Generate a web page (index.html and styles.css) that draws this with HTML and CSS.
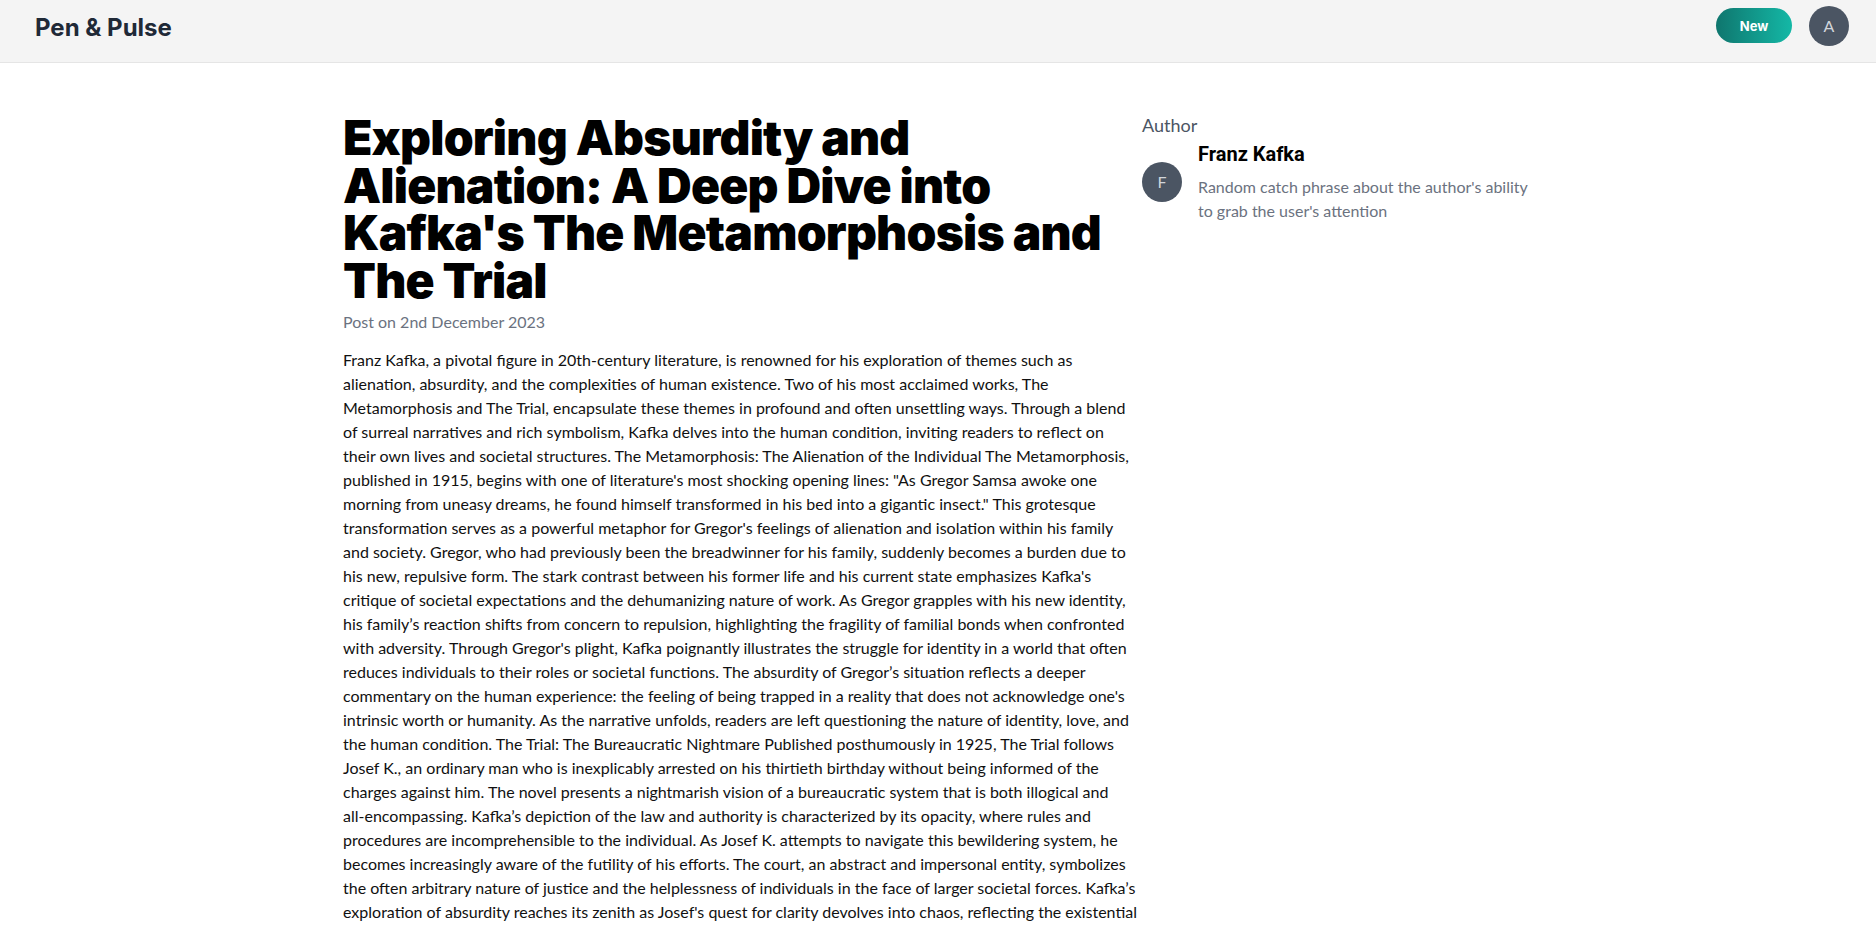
FILE: index.html
```html
<!DOCTYPE html>
<html lang="en">
<head>
<meta charset="utf-8">
<title>Pen &amp; Pulse</title>
<link rel="stylesheet" href="styles.css">
</head>
<body>
<header class="topbar">
  <div class="logo">Pen &amp; Pulse</div>
  <div class="top-actions">
    <button class="btn-new">New</button>
    <div class="avatar">A</div>
  </div>
</header>
<main class="layout">
  <article class="post">
    <h1 class="post-title">Exploring Absurdity and Alienation: A Deep Dive into Kafka's The Metamorphosis and The Trial</h1>
    <p class="post-date">Post on 2nd December 2023</p>
    <p class="post-body">Franz Kafka, a pivotal figure in 20th-century literature, is renowned for his exploration of themes such as alienation, absurdity, and the complexities of human existence. Two of his most acclaimed works, The Metamorphosis and The Trial, encapsulate these themes in profound and often unsettling ways. Through a blend of surreal narratives and rich symbolism, Kafka delves into the human condition, inviting readers to reflect on their own lives and societal structures. The Metamorphosis: The Alienation of the Individual The Metamorphosis, published in 1915, begins with one of literature's most shocking opening lines: "As Gregor Samsa awoke one morning from uneasy dreams, he found himself transformed in his bed into a gigantic insect." This grotesque transformation serves as a powerful metaphor for Gregor's feelings of alienation and isolation within his family and society. Gregor, who had previously been the breadwinner for his family, suddenly becomes a burden due to his new, repulsive form. The stark contrast between his former life and his current state emphasizes Kafka's critique of societal expectations and the dehumanizing nature of work. As Gregor grapples with his new identity, his family’s reaction shifts from concern to repulsion, highlighting the fragility of familial bonds when confronted with adversity. Through Gregor's plight, Kafka poignantly illustrates the struggle for identity in a world that often reduces individuals to their roles or societal functions. The absurdity of Gregor’s situation reflects a deeper commentary on the human experience: the feeling of being trapped in a reality that does not acknowledge one's intrinsic worth or humanity. As the narrative unfolds, readers are left questioning the nature of identity, love, and the human condition. The Trial: The Bureaucratic Nightmare Published posthumously in 1925, The Trial follows Josef K., an ordinary man who is inexplicably arrested on his thirtieth birthday without being informed of the charges against him. The novel presents a nightmarish vision of a bureaucratic system that is both illogical and <span class="nowrap">all-encompassing.</span> Kafka’s depiction of the law and authority is characterized by its opacity, where rules and procedures are incomprehensible to the individual. As Josef K. attempts to navigate this bewildering system, he becomes increasingly aware of the futility of his efforts. The court, an abstract and impersonal entity, symbolizes the often arbitrary nature of justice and the helplessness of individuals in the face of larger societal forces. Kafka’s exploration of absurdity reaches its zenith as Josef's quest for clarity devolves into chaos, reflecting the existential anxiety of modern life. Both works remain strikingly relevant, reminding readers of the enduring struggle to find meaning in a world that so often resists it.</p>
  </article>
  <aside class="sidebar">
    <h2 class="side-label">Author</h2>
    <div class="author">
      <div class="author-avatar">F</div>
      <div class="author-info">
        <h3 class="author-name">Franz Kafka</h3>
        <p class="author-bio">Random catch phrase about the author's ability to grab the user's attention</p>
      </div>
    </div>
  </aside>
</main>
</body>
</html>
```
FILE: styles.css
```css
* { box-sizing: border-box; }

body {
  margin: 0;
  background: #ffffff;
  font-family: "Lato", "Liberation Sans", sans-serif;
  color: #111111;
}

.topbar {
  height: 63px;
  display: flex;
  align-items: center;
  justify-content: space-between;
  padding: 0 27px 11px 35px;
  background: #f4f4f4;
  border-bottom: 1px solid #e5e5e5;
}

.logo {
  font-family: "Inter", "Liberation Sans", sans-serif;
  font-weight: 700;
  font-size: 24px;
  line-height: 32px;
  padding-top: 4px;
  color: #1f2937;
}

.top-actions {
  display: flex;
  align-items: center;
  gap: 17px;
}

.btn-new {
  width: 76px;
  height: 35px;
  border: none;
  border-radius: 18px;
  background: linear-gradient(to right, #0f766e, #14b8a6);
  color: #ffffff;
  font-family: "Inter", "Liberation Sans", sans-serif;
  font-weight: 700;
  font-size: 13px;
  padding: 0;
  cursor: pointer;
}

.avatar {
  width: 40px;
  height: 40px;
  border-radius: 50%;
  background: #4b5563;
  color: #d1d5db;
  display: flex;
  align-items: center;
  justify-content: center;
  font-size: 16px;
}

.layout {
  max-width: 1190px;
  margin: 0 auto;
  padding-top: 48px;
  display: flex;
  align-items: flex-start;
}

.post {
  width: 799px;
  flex: none;
  padding-right: 3px;
}

.post-title {
  margin: 3px 0 0;
  font-family: "Inter", "Liberation Sans", sans-serif;
  font-weight: 900;
  font-size: 48px;
  line-height: 47.5px;
  letter-spacing: -0.8px;
  color: #000000;
}

.post-date {
  margin: 6px 0 0;
  font-size: 16px;
  line-height: 24px;
  color: #6b7280;
}

.post-body {
  margin: 14px 0 0;
  font-size: 16px;
  line-height: 24px;
  color: #111111;
}

.nowrap {
  white-space: nowrap;
}

.sidebar {
  flex: 1;
  min-width: 0;
}

.side-label {
  margin: 0;
  font-weight: 400;
  font-size: 18px;
  line-height: 28px;
  color: #4b5563;
}

.author {
  display: flex;
  align-items: center;
  gap: 16px;
  margin-top: 1px;
}

.author-avatar {
  width: 40px;
  height: 40px;
  flex: none;
  border-radius: 50%;
  background: #4b5563;
  color: #d1d5db;
  display: flex;
  align-items: center;
  justify-content: center;
  font-size: 16px;
}

.author-info {
  flex: 1;
  min-width: 0;
}

.author-name {
  margin: 0;
  font-family: "Roboto", "Liberation Sans", sans-serif;
  font-weight: 700;
  font-size: 20px;
  line-height: 28px;
  color: #000000;
}

.author-bio {
  margin: 7px 0 0;
  font-size: 16px;
  line-height: 24px;
  color: #6b7280;
}
```
